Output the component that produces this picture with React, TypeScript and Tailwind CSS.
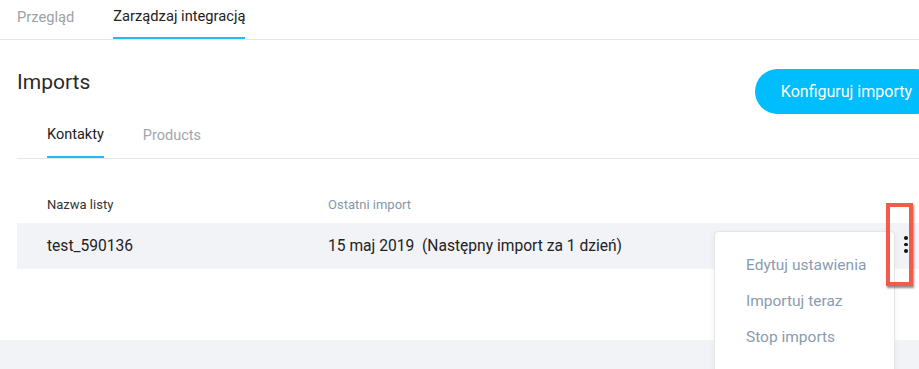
import React from 'react';

const font = { fontFamily: 'Roboto, "Noto Sans", sans-serif' };

const MenuItem: React.FC<{ label: string }> = ({ label }) => (
    <div className="h-[36px] flex items-center pl-[31px] text-[15.5px] text-[#8a9bb0]">{label}</div>
);

const App: React.FC = () => {
    return (
        <div className="w-[919px] h-[369px] overflow-hidden bg-white relative" style={font}>
            <div className="h-[40px] border-b border-[#e4e6ea] flex pl-[17px] gap-[39px]">
                <div className="h-full flex items-center text-[14.7px] text-[#9ca1a8] pb-[4px]">Przegląd</div>
                <div className="h-full flex items-center text-[14.7px] text-[#222] pb-[4px] border-b-2 border-[#1ebcf0] -mb-px">Zarządzaj integracją</div>
            </div>

            <div className="w-[955px] px-[17px]">
                <div className="flex items-start justify-between mt-[29px] h-[45px]">
                    <h1 className="text-[21px] leading-[28px] text-[#2a2a2a] font-normal -mt-px">Imports</h1>
                    <button className="h-[45px] px-[26px] rounded-full bg-[#00bdfd] text-white text-[16px]">Konfiguruj importy</button>
                </div>

                <div className="h-[45px] border-b border-[#e4e6ea] flex pl-[30px] gap-[39px]">
                    <div className="h-full flex items-center text-[14.5px] text-[#222] border-b-2 border-[#1ebcf0] -mb-px">Kontakty</div>
                    <div className="h-full flex items-center text-[14.5px] text-[#a0a6ad]">Products</div>
                </div>

                <div className="mt-[35px] flex h-[21px] items-center pl-[30px] text-[13px]">
                    <div className="w-[281px] text-[#333]">Nazwa listy</div>
                    <div className="text-[#8797a8]">Ostatni import</div>
                </div>

                <div className="mt-[8px] h-[46px] bg-[#f2f3f7] flex items-center pl-[30px] text-[15.6px] text-[#222] relative pt-px">
                    <div className="w-[281px]">test_590136</div>
                    <div className="whitespace-pre">15 maj 2019  (Następny import za 1 dzień)</div>
                </div>
            </div>

            <div className="absolute left-0 right-0 top-[340px] bottom-0 bg-[#f2f3f7]" />

            {/* dropdown menu */}
            <div className="absolute left-[714px] top-[231px] w-[181px] h-[160px] bg-white border border-[#e3e5e9] rounded-[4px] shadow-[0_2px_6px_rgba(0,0,0,0.06)] pt-[16px]">
                <MenuItem label="Edytuj ustawienia" />
                <MenuItem label="Importuj teraz" />
                <MenuItem label="Stop imports" />
            </div>

            {/* kebab */}
            <div className="absolute left-[904px] top-[236px] flex flex-col gap-[3px]">
                <span className="block w-[3.5px] h-[3.5px] rounded-full bg-[#111]" />
                <span className="block w-[3.5px] h-[3.5px] rounded-full bg-[#111]" />
                <span className="block w-[3.5px] h-[3.5px] rounded-full bg-[#111]" />
            </div>

            {/* highlight annotation */}
            <div className="absolute left-[886px] top-[203px] w-[27px] h-[83px] border-[4px] border-[#f25a4b] shadow-[1px_2px_2px_rgba(0,0,0,0.45)]" />
        </div>
    );
};

export default App;
